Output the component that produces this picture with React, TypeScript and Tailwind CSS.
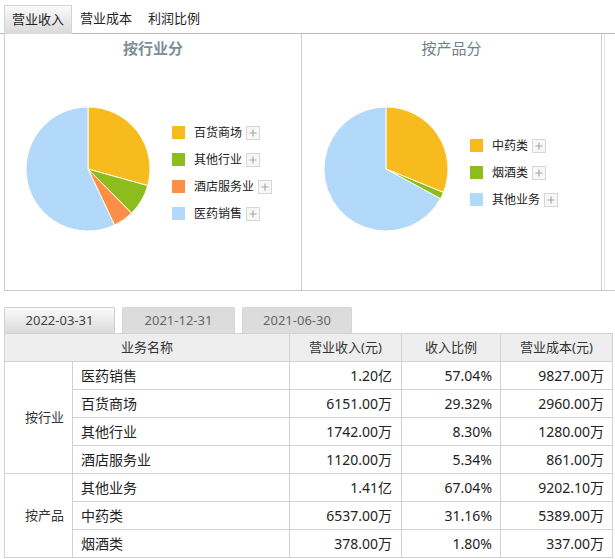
import React from "react";

type Slice = { label: string; value: number; color: string };

const YELLOW = "#f8bb1d";
const GREEN = "#8dbd1c";
const ORANGE = "#fd8e48";
const BLUE = "#b3d9fa";

function piePaths(data: Slice[], r: number, cx: number, cy: number) {
  const total = data.reduce((s, d) => s + d.value, 0);
  let a = -Math.PI / 2;
  return data.map((d) => {
    const sweep = (d.value / total) * Math.PI * 2;
    const a2 = a + sweep;
    const x1 = cx + r * Math.cos(a);
    const y1 = cy + r * Math.sin(a);
    const x2 = cx + r * Math.cos(a2);
    const y2 = cy + r * Math.sin(a2);
    const large = sweep > Math.PI ? 1 : 0;
    const path = `M${cx},${cy} L${x1.toFixed(2)},${y1.toFixed(2)} A${r},${r} 0 ${large} 1 ${x2.toFixed(2)},${y2.toFixed(2)} Z`;
    a = a2;
    return { path, color: d.color };
  });
}

function Pie({ data }: { data: Slice[] }) {
  const paths = piePaths(data, 62, 64, 64);
  return (
    <svg width="128" height="128" viewBox="0 0 128 128" className="shrink-0">
      {paths.map((p, i) => (
        <path key={i} d={p.path} fill={p.color} stroke="#fffdf0" strokeWidth="1" strokeLinejoin="round" />
      ))}
    </svg>
  );
}

function PlusBox() {
  return (
    <span className="ml-[4px] inline-flex h-[14px] w-[14px] items-center justify-center border border-[#d6d6d6] bg-[#f7f7f7]">
      <svg width="8" height="8" viewBox="0 0 8 8">
        <path d="M4 0.5V7.5M0.5 4H7.5" stroke="#a8a8a8" strokeWidth="1.2" />
      </svg>
    </span>
  );
}

function Legend({ data }: { data: Slice[] }) {
  return (
    <div className="flex flex-col">
      {data.map((d) => (
        <div key={d.label} className="flex h-[27px] items-center">
          <span className="h-[13px] w-[13px] shrink-0" style={{ backgroundColor: d.color }} />
          <span className="ml-[9px] text-[12px] leading-[14px] text-[#222]">{d.label}</span>
          <PlusBox />
        </div>
      ))}
    </div>
  );
}

const industry: Slice[] = [
  { label: "百货商场", value: 29.32, color: YELLOW },
  { label: "其他行业", value: 8.3, color: GREEN },
  { label: "酒店服务业", value: 5.34, color: ORANGE },
  { label: "医药销售", value: 57.04, color: BLUE },
];

const product: Slice[] = [
  { label: "中药类", value: 31.16, color: YELLOW },
  { label: "烟酒类", value: 1.8, color: GREEN },
  { label: "其他业务", value: 67.04, color: BLUE },
];

type Row = { name: string; rev: string; ratio: string; cost: string };

const groups: { label: string; rows: Row[] }[] = [
  {
    label: "按行业",
    rows: [
      { name: "医药销售", rev: "1.20亿", ratio: "57.04%", cost: "9827.00万" },
      { name: "百货商场", rev: "6151.00万", ratio: "29.32%", cost: "2960.00万" },
      { name: "其他行业", rev: "1742.00万", ratio: "8.30%", cost: "1280.00万" },
      { name: "酒店服务业", rev: "1120.00万", ratio: "5.34%", cost: "861.00万" },
    ],
  },
  {
    label: "按产品",
    rows: [
      { name: "其他业务", rev: "1.41亿", ratio: "67.04%", cost: "9202.10万" },
      { name: "中药类", rev: "6537.00万", ratio: "31.16%", cost: "5389.00万" },
      { name: "烟酒类", rev: "378.00万", ratio: "1.80%", cost: "337.00万" },
    ],
  },
];

export default function App() {
  const cell = "border border-[#d2d2d2]";
  return (
    <div className="relative h-[559px] w-[615px] overflow-hidden bg-white font-['Noto_Sans','Noto_Sans_CJK_SC',sans-serif] text-[#333]">
      {/* top tabs */}
      <div className="flex h-[34px] items-end border-b border-[#b9b9b9] pl-[4px]">
        <div className="-mb-px flex h-[29px] items-center border border-b-0 border-[#d4d4d4] bg-gradient-to-b from-[#fafafa] to-[#d9d9d9] px-[7px] text-[13px] text-[#222]">
          营业收入
        </div>
        <div className="flex h-[28px] items-center px-[8px] text-[13px] text-[#222]">营业成本</div>
        <div className="flex h-[28px] items-center px-[8px] text-[13px] text-[#222]">利润比例</div>
      </div>

      {/* chart panels */}
      <div className="ml-[4px] flex h-[257px] border-b border-[#c9c9c9]">
        <div className="flex w-[298px] shrink-0 flex-col border-l border-r border-[#cfcfcf]">
          <div className="mt-[4px] h-[20px] text-center text-[15px] font-bold leading-[20px] text-[#7d8e9c]">按行业分</div>
          <div className="mt-[47px] flex items-start">
            <div className="ml-[19px]">
              <Pie data={industry} />
            </div>
            <div className="ml-[20px] mt-[14px]">
              <Legend data={industry} />
            </div>
          </div>
        </div>
        <div className="flex w-[300px] shrink-0 flex-col border-r border-[#cfcfcf]">
          <div className="mt-[4px] h-[20px] text-center text-[15px] leading-[20px] text-[#6f7f8c]">按产品分</div>
          <div className="mt-[47px] flex items-start">
            <div className="ml-[20px]">
              <Pie data={product} />
            </div>
            <div className="ml-[20px] mt-[27px]">
              <Legend data={product} />
            </div>
          </div>
        </div>
        <div className="w-[3px] shrink-0 border-r border-[#e6e6e6]" />
      </div>

      {/* date tabs */}
      <div className="ml-[4px] mt-[16px] flex h-[26px] items-end gap-[7px]">
        <div className="flex h-[26px] w-[111px] items-center justify-center rounded-t-[2px] border border-b-0 border-[#d0d0d0] bg-gradient-to-b from-[#fbfbfb] to-[#dadada] text-[13px] text-[#444]">
          2022-03-31
        </div>
        <div className="flex h-[26px] w-[113px] items-center justify-center rounded-t-[2px] border border-b-0 border-[#d6d6d6] bg-[#dcdcdc] text-[13px] text-[#666]">
          2021-12-31
        </div>
        <div className="flex h-[26px] w-[110px] items-center justify-center rounded-t-[2px] border border-b-0 border-[#d6d6d6] bg-[#dcdcdc] text-[13px] text-[#666]">
          2021-06-30
        </div>
      </div>

      {/* table */}
      <table className="ml-[4px] w-[608px] table-fixed border-collapse">
        <colgroup>
          <col className="w-[68px]" />
          <col className="w-[217px]" />
          <col className="w-[112px]" />
          <col className="w-[99px]" />
          <col className="w-[112px]" />
        </colgroup>
        <thead>
          <tr className="h-[28px] bg-[#eeeeee] text-[13px] text-[#333]">
            <th colSpan={2} className={`${cell} font-normal`}>业务名称</th>
            <th className={`${cell} font-normal`}>营业收入(元)</th>
            <th className={`${cell} font-normal`}>收入比例</th>
            <th className={`${cell} font-normal`}>营业成本(元)</th>
          </tr>
        </thead>
        <tbody>
          {groups.map((g) =>
            g.rows.map((r, i) => (
              <tr key={r.name} className="h-[28px] text-[14px] text-[#222]">
                {i === 0 && (
                  <td rowSpan={g.rows.length} className={`${cell} pl-[12px] text-center text-[13px] text-[#333]`}>
                    {g.label}
                  </td>
                )}
                <td className={`${cell} pl-[8px] text-left`}>{r.name}</td>
                <td className={`${cell} pr-[9px] text-right`}>{r.rev}</td>
                <td className={`${cell} pr-[8px] text-right`}>{r.ratio}</td>
                <td className={`${cell} pr-[8px] text-right`}>{r.cost}</td>
              </tr>
            ))
          )}
        </tbody>
      </table>
    </div>
  );
}
